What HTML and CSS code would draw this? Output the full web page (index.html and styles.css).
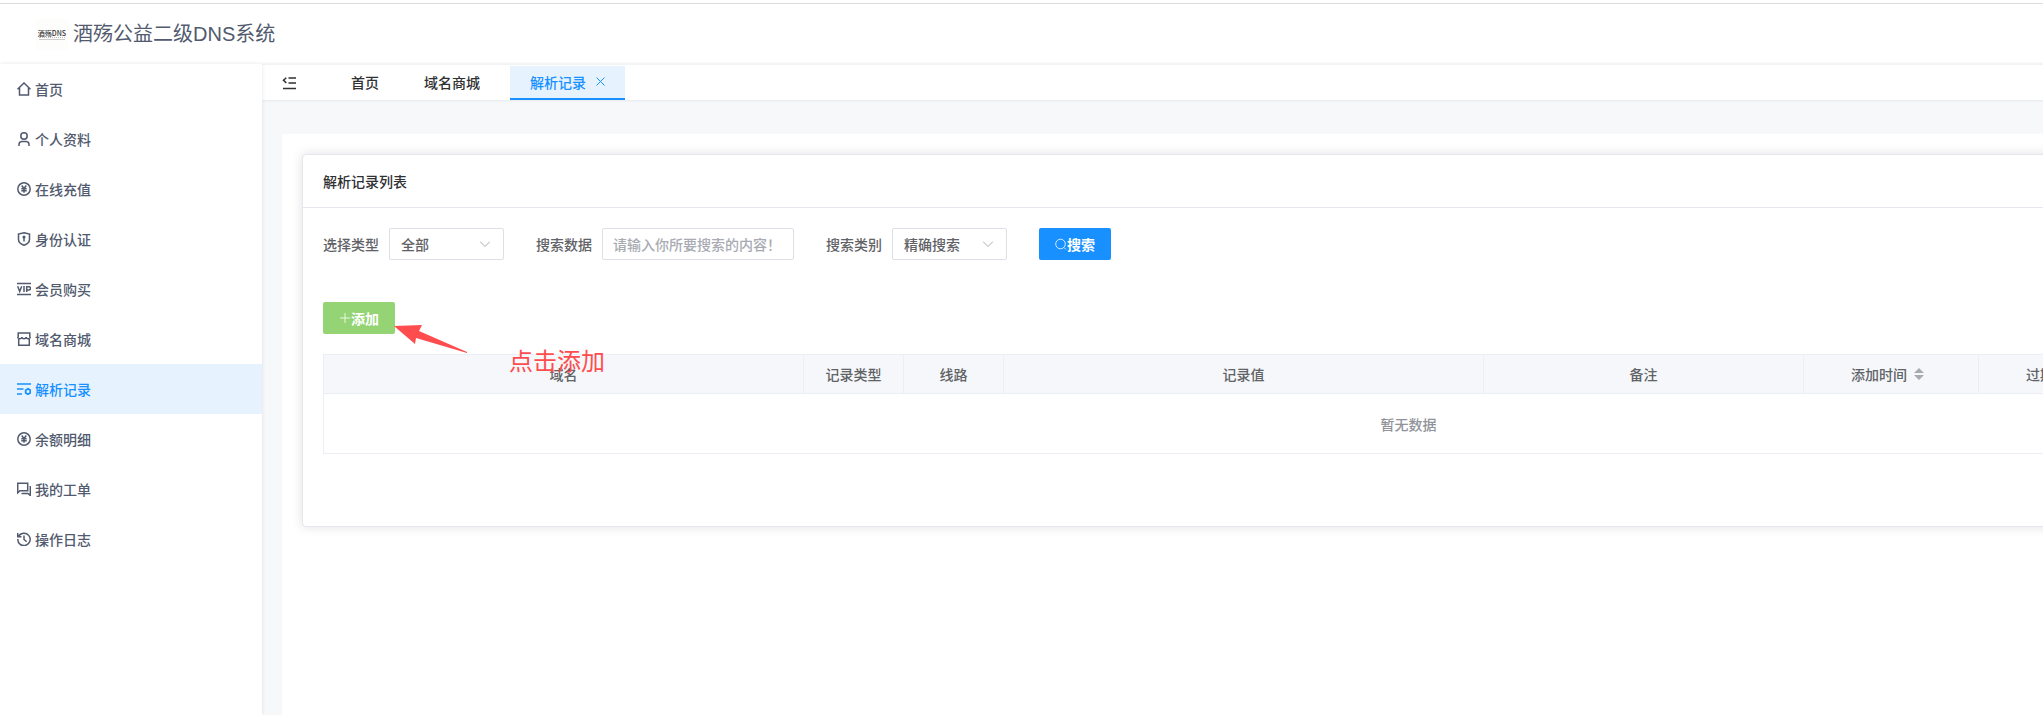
FILE: index.html
```html
<!DOCTYPE html>
<html lang="zh-CN">
<head>
  <meta charset="UTF-8">
  <title>酒殇公益二级DNS系统</title>
  <link rel="stylesheet" href="styles.css">
</head>
<body>
  <header class="header">
    <div class="logo">
      <span class="logo-name">酒殇DNS</span>
      <span class="logo-line"></span>
    </div>
    <h1 class="header-title">酒殇公益二级DNS系统</h1>
  </header>

  <div class="layout">
    <nav class="sidebar">
      <a href="#" class="menu-item">
        <svg class="icon" viewBox="0 0 14 14"><path d="M.5 7.200 7 1l6.500 6.200M2.500 5.500V13h9V5.500"/></svg>
        首页
      </a>
      <a href="#" class="menu-item">
        <svg class="icon" viewBox="0 0 14 14"><circle cx="7" cy="4" r="3.200"/><path d="M2 14v-1.500C2 10.500 3.500 9.500 5 9.500h4c1.500 0 3 1 3 3V14"/></svg>
        个人资料
      </a>
      <a href="#" class="menu-item">
        <svg class="icon" viewBox="0 0 14 14"><circle cx="7" cy="7" r="6.200"/><path d="m4.700 3.500 2.300 3 2.300-3M4.300 6.700h5.400M4.300 8.700h5.400M7 6.500v4.300"/></svg>
        在线充值
      </a>
      <a href="#" class="menu-item">
        <svg class="icon" viewBox="0 0 14 14"><path d="M7 .8 12.500 2v5.500c0 3-2.500 4.700-5.500 5.800-3-1.100-5.500-2.800-5.500-5.800V2z"/><path d="M7 5v4.500"/><circle cx="7" cy="5" r=".8"/></svg>
        身份认证
      </a>
      <a href="#" class="menu-item">
        <svg class="icon" viewBox="0 0 14 14"><path d="M0 1.500h14M0 12.500h14M.7 4.300 2.700 9.500l2-5.200M7 4v6M9.700 10V4.700h2.100a1.600 1.600 0 0 1 0 3.300H9.700"/></svg>
        会员购买
      </a>
      <a href="#" class="menu-item">
        <svg class="icon" viewBox="0 0 14 14"><path d="M1.200 5V1h11.600v4M1.700 6v7.200h10.600V6M.7 5c0 2.200 4.200 2.200 4.200 0 0 2.200 4.200 2.200 4.200 0 0 2.200 4.200 2.200 4.200 0"/></svg>
        域名商城
      </a>
      <a href="#" class="menu-item active">
        <svg class="icon" viewBox="0 0 14 14"><path d="M0 2h14M0 7h6.500M0 12h5"/><path d="m11 6.800 2.300 1.400v2.700L11 12.300l-2.300-1.400V8.200z" stroke-width="1.800"/></svg>
        解析记录
      </a>
      <a href="#" class="menu-item">
        <svg class="icon" viewBox="0 0 14 14"><circle cx="7" cy="7" r="6.200"/><path d="m4.700 3.500 2.300 3 2.300-3M4.300 6.700h5.400M4.300 8.700h5.400M7 6.500v4.300"/></svg>
        余额明细
      </a>
      <a href="#" class="menu-item">
        <svg class="icon" viewBox="0 0 14 14"><path d="M.7 1.200h10v7.500H3L.7 10.800zM13.300 4v9.500L11 11.500H4.500"/></svg>
        我的工单
      </a>
      <a href="#" class="menu-item">
        <svg class="icon" viewBox="0 0 14 14"><path d="M1.500 4.500A6.200 6.200 0 1 1 .8 7M.7 1v3.700h3.800M7 3.500v4l2.700 2.300"/></svg>
        操作日志
      </a>
    </nav>

    <main class="main">
      <div class="tabs">
        <button class="fold-button" aria-label="收起菜单">
          <svg class="icon" viewBox="0 0 14 14"><path d="M6.500 2H14M6.500 7H14M1 12.500h13M4.300 1.700 1.500 4.300l2.800 2.600"/></svg>
        </button>
        <a href="#" class="tab">首页</a>
        <a href="#" class="tab">域名商城</a>
        <a href="#" class="tab active">
          解析记录
          <svg class="tab-close" viewBox="0 0 9 9"><path d="m.5.5 8 8M8.500.5l-8 8"/></svg>
        </a>
      </div>

      <div class="content">
        <section class="card">
          <h2 class="card-header">解析记录列表</h2>
          <div class="card-body">
            <form class="filters">
              <div class="form-item">
                <label for="recordType">选择类型</label>
                <div class="select-box">
                  <select id="recordType"><option>全部</option></select>
                  <svg class="select-arrow" viewBox="0 0 10 6"><path d="m0 .5 5 5 5-5"/></svg>
                </div>
              </div>
              <div class="form-item">
                <label for="keyword">搜索数据</label>
                <input type="text" id="keyword" placeholder="请输入你所要搜索的内容！">
              </div>
              <div class="form-item">
                <label for="searchMode">搜索类别</label>
                <div class="select-box">
                  <select id="searchMode"><option>精确搜索</option></select>
                  <svg class="select-arrow" viewBox="0 0 10 6"><path d="m0 .5 5 5 5-5"/></svg>
                </div>
              </div>
              <button type="button" class="button button-primary">
                <svg class="button-icon" viewBox="0 0 12 12"><circle cx="5.500" cy="6" r="4.800"/><path d="m9 9.500 2 2"/></svg>搜索
              </button>
            </form>

            <div class="toolbar">
              <button type="button" class="button button-success">
                <svg class="button-icon" viewBox="0 0 12 12"><path d="M6 1v10M1 6h10"/></svg>添加
              </button>
              <div class="tip">
                <svg class="tip-arrow" viewBox="0 0 73 28"><path d="M0 1 28 0l-3 6 48 21v1L22 13l-1 6z"/></svg>
                <span class="tip-text">点击添加</span>
              </div>
            </div>

            <table class="record-table">
              <colgroup>
                <col class="col-wide">
                <col class="col-small">
                <col class="col-small">
                <col class="col-wide">
                <col class="col-remark">
                <col class="col-time">
                <col class="col-time">
                <col>
              </colgroup>
              <thead>
                <tr>
                  <th>域名</th>
                  <th>记录类型</th>
                  <th>线路</th>
                  <th>记录值</th>
                  <th>备注</th>
                  <th><span class="sortable">添加时间<svg class="sort-icon" viewBox="0 0 10 12"><path d="M0 5 5 0l5 5zM0 7l5 5 5-5z"/></svg></span></th>
                  <th><span class="sortable">过期时间<svg class="sort-icon" viewBox="0 0 10 12"><path d="M0 5 5 0l5 5zM0 7l5 5 5-5z"/></svg></span></th>
                  <th>操作</th>
                </tr>
              </thead>
              <tbody>
                <tr>
                  <td colspan="8" class="empty">暂无数据</td>
                </tr>
              </tbody>
            </table>
          </div>
        </section>
      </div>
    </main>
  </div>
</body>
</html>
```

FILE: styles.css
```css
* {
  box-sizing: border-box;
}

body {
  display: flex;
  flex-direction: column;
  min-height: 100vh;
  margin: 0;
  overflow-x: hidden;
  font-family: "Noto Sans CJK SC", "Liberation Sans", sans-serif;
  font-size: 14px;
  font-weight: 500;
  line-height: 20px;
  color: #606266;
  background-color: #fff;
}

a {
  color: inherit;
  text-decoration: none;
}

button, input, select {
  font: inherit;
}

.icon {
  width: 14px;
  height: 14px;
  fill: none;
  stroke: currentColor;
  stroke-width: 1.5;
}

/* header */
.header {
  display: flex;
  align-items: center;
  gap: 5px;
  height: 64px;
  padding: 4px 36px 0;
  box-shadow: inset 0 3px #fff, inset 0 4px #dcdcdf;
}

.logo {
  display: flex;
  flex-direction: column;
  align-items: center;
  justify-content: center;
  width: 32px;
  height: 32px;
  background-color: #fdfdfc;
}

.logo-name {
  font-size: 7px;
  line-height: 8px;
  color: #333;
  white-space: nowrap;
}

.logo-line {
  width: 26px;
  height: 3px;
  border-top: 1px dotted #bbb;
  border-bottom: 1px solid #ccc;
}

.header-title {
  margin: 0;
  font-family: "Liberation Sans", "Noto Sans CJK SC", sans-serif;
  font-size: 20px;
  font-weight: 400;
  color: #515a6e;
}

/* sidebar */
.layout {
  display: flex;
  flex: 1;
}

.sidebar {
  z-index: 1;
  flex: none;
  width: 262px;
  background-color: #fff;
  box-shadow: 0 0 4px rgba(0, 21, 41, 0.1);
}

.menu-item {
  display: flex;
  align-items: center;
  gap: 4px;
  height: 50px;
  padding: 0 17px;
  color: #515a6e;
}

.menu-item.active {
  color: #1890ff;
  background-color: #e6f3ff;
}

/* tabs */
.main {
  display: flex;
  flex-direction: column;
  flex: 1;
  background-color: #f6f8fa;
}

.tabs {
  display: flex;
  align-items: center;
  gap: 5px;
  height: 36px;
  padding-left: 20px;
  border-top: 1px solid #f2f3f5;
  background-color: #fff;
  box-shadow: 0 0 3px rgba(0, 21, 41, 0.12);
}

.fold-button {
  display: flex;
  width: 44px;
  padding: 0;
  border: none;
  color: #303133;
  background: none;
}

.tab {
  display: flex;
  align-items: center;
  gap: 10px;
  height: 34px;
  padding: 0 20px;
  border-bottom: 2px solid transparent;
  color: #303133;
}

.tab.active {
  margin-left: 5px;
  border-bottom-color: #1890ff;
  color: #1890ff;
  background-color: #e6f3ff;
}

.tab-close {
  width: 9px;
  height: 9px;
  fill: none;
  stroke: currentColor;
}

/* card */
.content {
  flex: 1;
  margin: 34px 20px 0;
  padding: 20px;
  background-color: #fff;
}

.card {
  border: 1px solid #e4e7ed;
  border-radius: 4px;
  background-color: #fff;
  box-shadow: 0 0 12px rgba(0, 0, 0, 0.12);
}

.card-header {
  margin: 0;
  padding: 16px 20px;
  border-bottom: 1px solid #e4e7ed;
  font-size: 14px;
  font-weight: 500;
  color: #303133;
}

.card-body {
  padding: 20px 20px 72px;
}

.filters {
  display: flex;
  gap: 32px;
}

.form-item {
  display: flex;
  align-items: center;
  gap: 10px;
}

.form-item input, .form-item select {
  height: 32px;
  padding: 0 11px;
  border: 1px solid #dcdfe6;
  border-radius: 2px;
  color: #606266;
  background-color: #fff;
}

.form-item input {
  width: 192px;
  padding: 0 10px;
}

.form-item input::placeholder {
  color: #a8abb2;
}

.select-box {
  position: relative;
}

.select-box select {
  width: 115px;
  appearance: none;
}

.select-arrow {
  position: absolute;
  top: 13px;
  right: 14px;
  width: 10px;
  height: 6px;
  fill: none;
  stroke: #a8abb2;
  pointer-events: none;
}

.button {
  display: flex;
  align-items: center;
  justify-content: center;
  width: 72px;
  height: 32px;
  padding: 0;
  border: none;
  border-radius: 2px;
  font-weight: 700;
  color: #fff;
}

.button-primary {
  background-color: #1890ff;
}

.button-success {
  background-color: #95d475;
}

.button-icon {
  width: 12px;
  height: 12px;
  fill: none;
  stroke: currentColor;
  stroke-width: 0.8;
}

.toolbar {
  position: relative;
  margin: 42px 0 20px;
}

/* hint over the toolbar and table */
.tip {
  position: absolute;
  top: 23px;
  left: 71px;
  display: flex;
  gap: 42px;
  color: #ff4d4f;
}

.tip-arrow {
  width: 73px;
  height: 28px;
  fill: currentColor;
}

.tip-text {
  padding-top: 17px;
  font-size: 24px;
  font-weight: 400;
  line-height: 36px;
}

/* table */
.record-table {
  width: 100%;
  min-width: 2171px;
  border: 1px solid #ebeef5;
  border-width: 1px 0 0 1px;
  border-spacing: 0;
  table-layout: fixed;
}

.record-table th, .record-table td {
  padding: 0;
  border: 1px solid #ebeef5;
  border-width: 0 1px 1px 0;
}

.record-table th {
  height: 39px;
  font-weight: 500;
  background-color: #f5f7fa;
}

.record-table .empty {
  height: 60px;
  text-align: center;
  color: #909399;
}

.col-wide {
  width: 480px;
}

.col-small {
  width: 100px;
}

.col-remark {
  width: 320px;
}

.col-time {
  width: 175px;
}

.sortable {
  display: inline-flex;
  align-items: center;
}

.sort-icon {
  width: 10px;
  height: 12px;
  margin: 0 7px;
  fill: #a8abb2;
}
```
